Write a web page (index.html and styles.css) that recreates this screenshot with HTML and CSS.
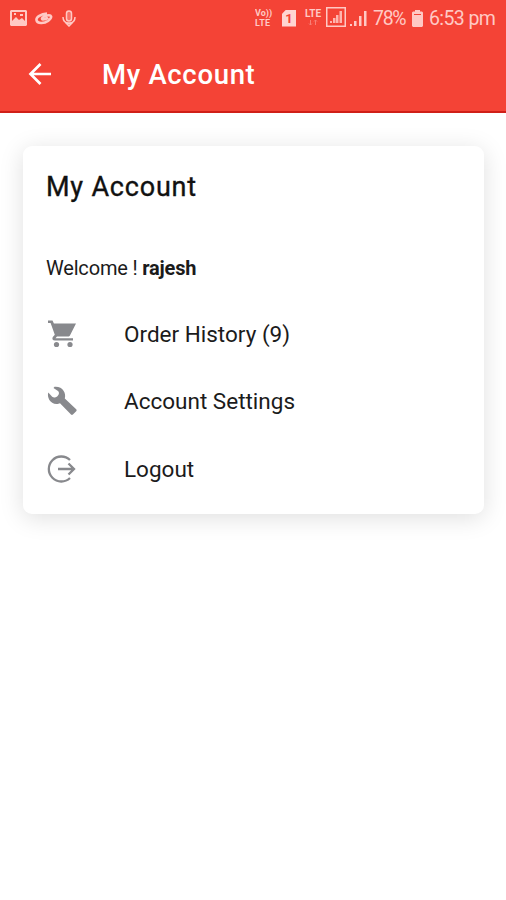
FILE: index.html
```
<!DOCTYPE html>
<html lang="en">
<head>
<meta charset="utf-8">
<title>My Account</title>
<link rel="stylesheet" href="styles.css">
</head>
<body>
<header class="header">
  <div class="status">
    <svg class="picture" width="17" height="16" viewBox="0 0 17 16"><path fill="currentColor" fill-rule="evenodd" d="M1 0h15l1 1v14l-1 1H1l-1-1V1zM2 2v9l4-4 3 3 3-2 3 3V2zM4 3h2v2H4zM10 4h3v2h-3z"/></svg>
    <svg class="swirl" width="18" height="14" viewBox="0 0 18 14"><path fill="none" stroke="currentColor" stroke-width="2.600" d="M12 2.500C6 3 1 6 1.500 9c.5 4 8 3.500 11.500 1C18 6 16.500 3.500 12 4.500 8 5.500 5.500 8 8 8.500c2 0 4-1 5-2"/></svg>
    <svg class="mic" width="14" height="17" viewBox="0 0 14 17" fill="none" stroke="currentColor" stroke-width="1.500"><rect x="4.500" y="1" width="5" height="10" rx="2.500" fill="currentColor" fill-opacity=".35"/><path d="M1 7c0 4 2 6 6 6s6-2 6-6M4.500 13.500h5L7 16z"/></svg>
    <div class="volte"><span>Vo))</span><span class="wide">LTE</span></div>
    <div class="sim">1</div>
    <div class="lte"><span>LTE</span><svg width="10" height="6" viewBox="0 0 10 6" fill="none" stroke="currentColor" opacity=".45"><path d="M2.500 0v5M1 3.500l1.500 1.500L4 3.500M7.500 5V0M6 1.500L7.500 0 9 1.500"/></svg></div>
    <svg class="boxed" width="20" height="20" viewBox="0 0 20 20"><rect x=".75" y=".75" width="18.500" height="18.500" fill="none" stroke="currentColor" stroke-width="1.500"/><path fill="currentColor" d="M4 14h2v2H4zM7 11h2.500v5H7zM10 8h2.500v8H10zM13.500 4H16v12h-2.500z" opacity=".85"/></svg>
    <svg class="signal" width="17" height="17" viewBox="0 0 17 17"><path fill="currentColor" d="M0 14h2v2H0zM4 11h2.500v5H4zM9 6h2.500v10H9zM14 1h2.500v15H14z"/></svg>
    <span class="percent">78%</span>
    <svg class="battery" width="11" height="17" viewBox="0 0 11 17"><path fill="currentColor" fill-rule="evenodd" d="M3 0h5v1.500h2l1 1V16l-1 1H1l-1-1V2.500l1-1h2zM2 4v1h7V4z"/></svg>
    <span class="time">6:53 pm</span>
  </div>
  <div class="toolbar">
    <svg class="back" width="24" height="24" viewBox="0 0 24 24" fill="none" stroke="currentColor" stroke-width="2.700"><path d="M23 12H2.500M12.500 2L2.500 12l10 10"/></svg>
    <h1 class="title">My Account</h1>
  </div>
</header>
<main class="card">
  <h2 class="heading">My Account</h2>
  <p class="welcome">Welcome ! <b>rajesh</b></p>
  <ul class="menu">
    <li><svg class="icon" viewBox="0 0 32 32"><path fill="currentColor" d="M2 2.500h4.500l1.400 3H30l-5.800 11.500c-.5 1-1.300 1.500-2.400 1.500H11l-1.500 1.800H27V22.500H9c-2.400 0-3.200-1.800-2.200-3.500l2-2.300L4.600 4.900H2z"/><circle cx="10.500" cy="26.500" r="2.600" fill="currentColor"/><circle cx="24" cy="26.500" r="2.600" fill="currentColor"/></svg><span class="orders">Order History (9)</span></li>
    <li><svg class="icon" viewBox="0 0 32 32"><path fill="currentColor" d="M2.300 7.500C.8 12 4 19 10.500 19c1.500 0 2.500-.2 3.500-.7L25 29.500c.6.600 1.300.6 1.900 0l3.300-3.300c.6-.6.6-1.300 0-1.900L18.800 13.500C20.500 8 16.500 1 8.500 1.800L7.500 3l4.500 3c1.500 1.200 1.200 3.500-.4 5-1.600 1.600-3.800 2-5.400.8z"/></svg><span class="settings">Account Settings</span></li>
    <li><svg class="icon" viewBox="0 0 32 32" fill="none" stroke="currentColor" stroke-width="2.300"><path d="M24 7A12.500 12.500 0 1 0 24 25M12 16h15.500M22.500 10.500L28 16l-5.500 5.500"/></svg><span class="logout">Logout</span></li>
  </ul>
</main>
</body>
</html>
```
FILE: styles.css
```
* { box-sizing: border-box; }
body { margin: 0; min-height: 900px; background: #fff; color: #1b1b1b; font-family: Roboto, sans-serif; }
h1, h2, p, ul { margin: 0; padding: 0; }
svg { display: block; flex: none; }

.header { height: 113px; background: #f44336; border-bottom: 2px solid #d01f18; }
.status { height: 36px; display: flex; align-items: center; padding-left: 10px; color: #ffc9c4; white-space: nowrap; }
.status > * { flex: none; }
.swirl { margin-left: 8px; }
.mic { margin-left: 9px; }
.volte { width: 18px; margin-left: 179px; display: grid; row-gap: 1px; font-size: 9px; line-height: 9px; font-weight: 700; }
.volte span { height: 9px; overflow: hidden; }
.wide { letter-spacing: .3px; }
.sim { width: 14px; height: 17px; margin-left: 9px; background: #ffd5d1; color: #f44336; clip-path: polygon(30% 0, 100% 0, 100% 100%, 0 100%, 0 25%); font-size: 13px; line-height: 18px; font-weight: 700; text-align: center; }
.lte { width: 18px; height: 18px; margin-left: 8px; display: grid; justify-items: center; font-size: 10px; line-height: 10px; font-weight: 700; }
.boxed { margin-left: 4px; margin-bottom: 2px; }
.signal { margin-left: 4px; }
.percent { width: 33px; margin-left: 6px; font-size: 19.500px; line-height: 37px; letter-spacing: -1.300px; }
.battery { margin-left: 6px; }
.time { margin-left: 6px; font-size: 19.500px; line-height: 37px; letter-spacing: -.6px; }

.toolbar { height: 75px; display: flex; align-items: center; padding-left: 28px; color: #fff; }
.title { margin: 2px 0 0 50px; font-size: 27.500px; line-height: 32px; font-weight: 500; letter-spacing: .68px; }

.card { width: 461px; height: 368px; margin: 33px 0 0 23px; padding: 25px 23px; border-radius: 9px; background: #fff; box-shadow: 0 4px 24px rgba(0, 0, 0, .13); }
.heading { font-size: 27px; line-height: 32px; font-weight: 400; -webkit-text-stroke: .35px #111; color: #111; letter-spacing: .8px; }
.welcome { margin-top: 52px; font-size: 20px; line-height: 26px; letter-spacing: -.18px; }
.menu { margin-top: 19px; list-style: none; }
.menu li { height: 67.500px; display: flex; align-items: center; font-size: 22.500px; }
.icon { width: 32px; height: 32px; margin-right: 46px; color: #88898d; }
```
